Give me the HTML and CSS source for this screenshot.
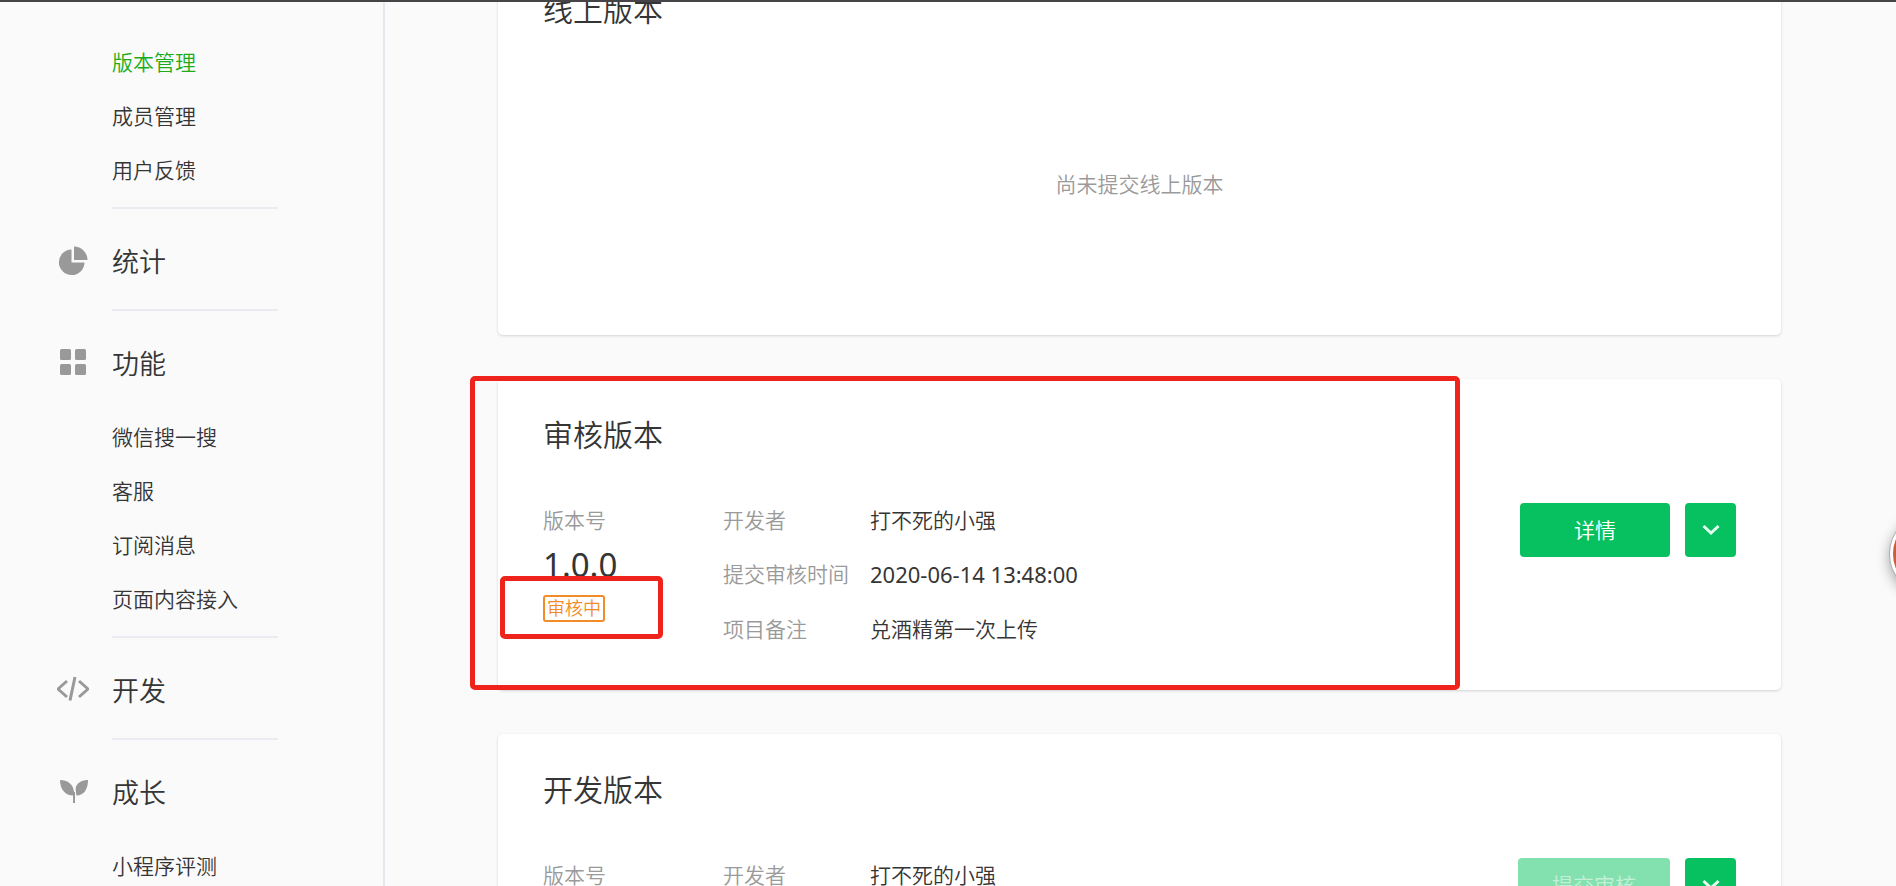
FILE: index.html
```html
<!DOCTYPE html>
<html lang="zh-CN">
<head>
<meta charset="utf-8">
<title>版本管理</title>
<link rel="stylesheet" href="styles.css">
</head>
<body>
<div class="topbar"></div>
<div class="shell">
  <nav class="sidebar">
    <section class="group">
      <a class="group-title" href="#"><span class="icon"></span>管理</a>
      <ul class="items">
        <li><a class="active" href="#">版本管理</a></li>
        <li><a href="#">成员管理</a></li>
        <li><a href="#">用户反馈</a></li>
      </ul>
    </section>
    <section class="group">
      <a class="group-title" href="#"><svg class="icon" viewBox="0 0 32 32"><path d="M14.500 3.500v13H27.500A12.800 12.800 0 1 1 14.500 3.500z"/><path d="M17 .5a13.500 13.500 0 0 1 13.500 13.500H17z"/></svg>统计</a>
    </section>
    <section class="group">
      <a class="group-title" href="#"><svg class="icon" viewBox="0 0 32 32"><rect x="3" y="1" width="11" height="11" rx="1.500"/><rect x="18" y="1" width="11" height="11" rx="1.500"/><rect x="3" y="16" width="11" height="11" rx="1.500"/><rect x="18" y="16" width="11" height="11" rx="1.500"/></svg>功能</a>
      <ul class="items">
        <li><a href="#">微信搜一搜</a></li>
        <li><a href="#">客服</a></li>
        <li><a href="#">订阅消息</a></li>
        <li><a href="#">页面内容接入</a></li>
      </ul>
    </section>
    <section class="group">
      <a class="group-title" href="#"><svg class="icon icon-line" viewBox="0 0 32 32"><path d="M10 6L1 14l9 8M22 6l9 8-9 8M18 2l-5 23.500"/></svg>开发</a>
    </section>
    <section class="group">
      <a class="group-title" href="#"><svg class="icon" viewBox="0 0 32 32"><path d="M3 3C10 3 18 7 17 18.500C9 19 3 13 3 3z"/><path d="M31 3C31 12 27 18.500 19.500 18.500C18.500 14 18.500 11 19 9.500C21 5 26 3 31 3z"/><path d="M16 15h2v11h-2z"/></svg>成长</a>
      <ul class="items">
        <li><a href="#">小程序评测</a></li>
      </ul>
    </section>
  </nav>
  <main class="main">
    <section class="card">
      <h2>线上版本</h2>
      <p class="empty">尚未提交线上版本</p>
    </section>
    <section class="card">
      <h2>审核版本</h2>
      <div class="card-body">
        <div class="version">
          <div class="label">版本号</div>
          <div class="number">1.0.0</div>
          <span class="tag">审核中</span>
        </div>
        <dl class="details">
          <dt>开发者</dt><dd>打不死的小强</dd>
          <dt>提交审核时间</dt><dd><time>2020-06-14 13:48:00</time></dd>
          <dt>项目备注</dt><dd>兑酒精第一次上传</dd>
        </dl>
        <div class="actions">
          <button class="btn" type="button">详情</button>
          <button class="btn btn-more" type="button" aria-label="更多"><svg viewBox="0 0 18 12"><path d="M1.500 2L9 9l7.500-7"/></svg></button>
        </div>
      </div>
      <div class="mark mark-card"></div>
      <div class="mark mark-tag"></div>
    </section>
    <section class="card">
      <h2>开发版本</h2>
      <div class="card-body">
        <div class="version">
          <div class="label">版本号</div>
          <div class="number">1.0.0</div>
        </div>
        <dl class="details">
          <dt>开发者</dt><dd>打不死的小强</dd>
        </dl>
        <div class="actions">
          <button class="btn" type="button" disabled>提交审核</button>
          <button class="btn btn-more" type="button" aria-label="更多"><svg viewBox="0 0 18 12"><path d="M1.500 2L9 9l7.500-7"/></svg></button>
        </div>
      </div>
    </section>
  </main>
</div>
<div class="bubble"></div>
</body>
</html>
```
FILE: styles.css
```css
* { box-sizing: border-box; }
body {
  margin: 0;
  background: #fafafa;
  color: #353535;
  font: 350 21px/54px "Noto Sans", "Noto Sans CJK SC", sans-serif;
}
h2, p, ul, dl, dd { margin: 0; padding: 0; }
ul { list-style: none; }
a { color: inherit; text-decoration: none; }

.topbar {
  position: fixed;
  inset: 0 0 auto;
  height: 2px;
  background: #464446;
  z-index: 5;
}
.shell {
  display: flex;
  height: 100vh;
  overflow: hidden;
}

.sidebar {
  flex: 0 0 385px;
  border-right: 2px solid #e8e8ee;
  overflow: hidden;
}
.group:first-child { margin-top: -66px; }
.group::before {
  content: "";
  display: block;
  width: 166px;
  height: 2px;
  margin-left: 112px;
  background: #ebebf2;
}
.group-title {
  display: flex;
  align-items: center;
  gap: 23px;
  margin: 26px 0 20px;
  padding-left: 57px;
  font-size: 27px;
}
.icon {
  width: 32px;
  height: 32px;
  fill: #999;
}
.icon-line {
  fill: none;
  stroke: #999;
  stroke-width: 3;
}
.items {
  margin-top: -1px;
  padding: 0 0 10px 112px;
}
.items a { display: block; }
.items .active { color: #1aad19; }

.main {
  flex: 1;
  padding: 0 115px 0 113px;
  margin-top: -46px;
}
.card {
  position: relative;
  margin-bottom: 44px;
  padding: 29px 45px 34px;
  background: #fff;
  border-radius: 5px;
  box-shadow: 0 1px 3px rgba(0, 0, 0, .16);
}
h2 {
  font-size: 30px;
  font-weight: 350;
}
.empty {
  display: flex;
  align-items: center;
  justify-content: center;
  height: 264px;
  padding-top: 30px;
  color: #9a9a9a;
}
.card-body {
  display: flex;
  margin-top: 31px;
}
.version { width: 180px; }
.label, dt { color: #9a9a9a; }
.number {
  font-size: 33px;
  font-weight: 400;
  line-height: 36px;
}
time {
  font-size: 22px;
  font-weight: 400;
}
.tag {
  display: block;
  width: fit-content;
  margin-top: 12px;
  padding: 0 2px;
  border: 2px solid #f28c28;
  border-radius: 3px;
  color: #f28c28;
  font-size: 18px;
  line-height: 23px;
}
.details {
  flex: 1;
  display: grid;
  grid-template-columns: 147px 1fr;
  align-content: start;
}
.actions {
  display: flex;
  gap: 15px;
  align-items: flex-start;
  padding-top: 10px;
}
.btn {
  min-width: 150px;
  height: 54px;
  padding: 0 34px;
  border: 0;
  border-radius: 4px;
  background: #07c160;
  color: #fff;
  font: inherit;
}
.btn:disabled {
  background: #83e0af;
  color: #c4f0d8;
}
.btn-more {
  display: grid;
  place-items: center;
  min-width: 0;
  width: 51px;
  padding: 0;
}
.btn-more svg {
  width: 18px;
  height: 12px;
  fill: none;
  stroke: #e6fff1;
  stroke-width: 3;
}

.mark {
  position: absolute;
  border: 5px solid #ee231c;
  border-radius: 5px;
}
.mark-card { inset: -3px 321px 0 -28px; }
.mark-tag {
  left: 2px;
  top: 197px;
  width: 163px;
  height: 63px;
}
.bubble {
  position: fixed;
  right: -74px;
  top: 514px;
  width: 80px;
  height: 80px;
  border: 3px solid #fff;
  border-radius: 50%;
  background: #c8603a;
  box-shadow: 0 0 0 1px #a9b0b4, 0 4px 14px rgba(0, 0, 0, .4);
}
```
